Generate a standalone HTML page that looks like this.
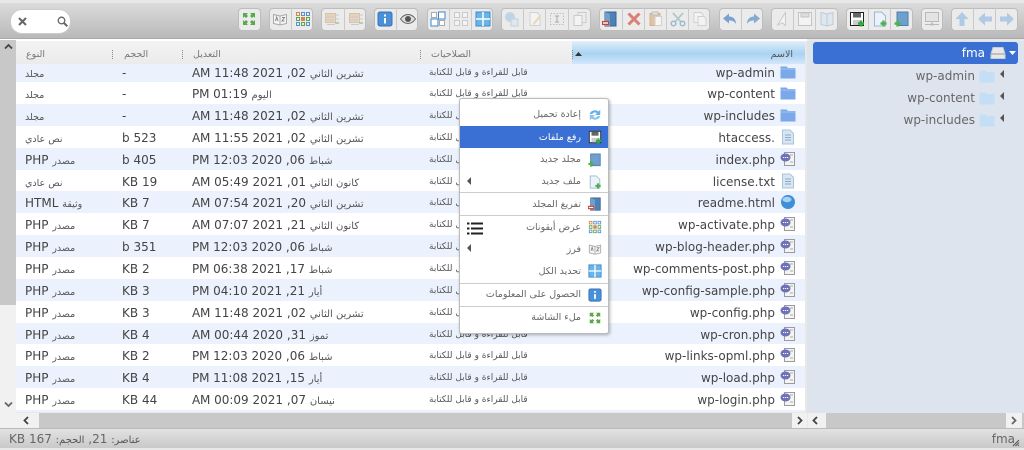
<!DOCTYPE html>
<html lang="ar"><head><meta charset="utf-8"><title>fma</title>
<style>
html,body{margin:0;padding:0}
body{width:1024px;height:450px;overflow:hidden;position:relative;background:#e8e8e8;font-family:"DejaVu Sans","Liberation Sans",sans-serif;font-size:12px;color:#333}
div,span,svg{position:absolute;box-sizing:border-box}
small{font-size:9.5px;color:#555}
.t small,#sx small{font-size:10px;letter-spacing:0}
#tb{left:0;top:3px;width:1024px;height:36px;background:linear-gradient(#dcdcdc,#b9b9b9);border-bottom:1px solid #a9a9a9}
#s{left:10px;top:9px;width:61px;height:25px;background:#fff;border-radius:12px;border:1px solid #ccc}
.g{top:8px;height:23px;border:1px solid #bdbdbd;border-radius:4px;background:#ebebeb}
.b{top:8px;height:23px;width:22px;border-left:1px solid #c9c9c9}
.b svg,.i{width:16px;height:16px}
.b svg{left:3px;top:3px}
.o svg{opacity:.4}
#white{left:0;top:39px;width:807px;height:2px;background:#fff}
#vb{left:0;top:40px;width:16px;height:373px;background:#f1f1f1}
#th{left:0;top:40px;width:16px;height:265px;background:#c8c8c8}
#hd{left:16px;top:41px;width:789px;height:23px;background:linear-gradient(#f3f3f3,#ebebeb)}
#hn{left:572px;top:41px;width:233px;height:23px;background:linear-gradient(#e3eefa,#a8d3f2 55%,#d3e7fa)}
.h{top:48px;font-size:9.5px;color:#777;direction:rtl;white-space:nowrap;line-height:13px}
.d{top:50px;width:1px;height:9px;border-left:1px dotted #888}
.r{left:16px;width:789px;height:22px;background:#fff}
.e{background:#ebf2fd}
.r span{top:4px;line-height:16px;direction:rtl;white-space:nowrap}
.n{right:30px;color:#444}
.m{left:413px;font-size:9px;color:#555}
.t{left:176px;color:#444;letter-spacing:-.15px}
.z{left:106px;color:#444}
.k{left:9px;color:#444}
.r svg{left:764px;top:3px}
#tree{left:807px;top:41px;width:217px;height:372px;background:#dde4ee}
#act{left:813px;top:42px;width:205px;height:22px;background:#3a70d4;border-radius:3px}
.tt{color:#666;white-space:nowrap;line-height:16px}
.ar{width:0;height:0;border-top:4px solid transparent;border-bottom:4px solid transparent;border-right:4px solid #555}
#menu{left:459px;top:98px;width:150px;height:236px;background:#fff;border:1px solid #bbb;border-radius:3px;box-shadow:1px 1px 3px rgba(0,0,0,.3)}
.mi{right:27px;font-size:9.500px;color:#666;direction:rtl;white-space:nowrap;line-height:14px;margin-top:1px}
#menu svg{left:128px}
#menu .i{width:14px;height:14px;margin-top:1px}
.sep{left:0;width:148px;height:1px;background:#ccc}
.hs{top:413px;height:15px;background:#c8c8c8}
.hb{top:413px;height:15px;background:#f1f1f1;color:#555}
.hb svg{left:3px;top:3px;width:9px;height:9px}
#st{left:0;top:428px;width:1024px;height:20px;background:linear-gradient(#e2e2e2,#c9c9c9);border-top:1px solid #bbb}
</style></head><body>
<svg width="0" height="0" style="display:none"><defs>
<symbol id="full" viewBox="0 0 16 16"><g fill="#5aa84a"><path d="M2 2h5l-1.500 1.500L7 5 5 7 3.500 5.500 2 7z"/><path d="M14 2v5l-1.500-1.500L11 7 9 5l1.500-1.500L9 2z"/><path d="M2 14V9l1.500 1.500L5 9l2 2-1.500 1.500L7 14z"/><path d="M14 14H9l1.500-1.500L9 11l2-2 1.500 1.500L14 9z"/></g></symbol>
<symbol id="sort" viewBox="0 0 16 16"><path d="M1.500 3.500 8 5l6.500-1.500v9L8 14l-6.500-1.500z" fill="#f4f4f4" stroke="#aaa"/><path d="M8 5v9" stroke="#aaa"/><path d="M3.500 10l1.200-4 1.200 4M10 6.500h2.500L10 10h2.500" fill="none" stroke="#888"/></symbol>
<symbol id="grid" viewBox="0 0 16 16"><g stroke-width="1" fill="none"><rect x="1.500" y="1.500" width="3" height="3" stroke="#d08a4a"/><rect x="6.500" y="1.500" width="3" height="3" stroke="#5b8fd0"/><rect x="11.500" y="1.500" width="3" height="3" stroke="#5b8fd0"/><rect x="1.500" y="6.500" width="3" height="3" stroke="#5aa84a"/><rect x="6.500" y="6.500" width="3" height="3" fill="#d08a4a" stroke="#d08a4a"/><rect x="11.500" y="6.500" width="3" height="3" stroke="#5aa84a"/><rect x="1.500" y="11.500" width="3" height="3" stroke="#5b8fd0"/><rect x="6.500" y="11.500" width="3" height="3" stroke="#5aa84a"/><rect x="11.500" y="11.500" width="3" height="3" stroke="#5b8fd0"/></g></symbol>
<symbol id="box" viewBox="0 0 16 16"><rect x="1.500" y="2.500" width="10" height="9" fill="#e0b070" stroke="#b98a50"/><path d="M3 6h7M3 9h7M12 4h3M12 8h3M3 13.500h8" stroke="#999"/><path d="M11 11h4v2h-4z" fill="#4dae4d"/></symbol>
<symbol id="info" viewBox="0 0 16 16"><rect x="1" y="1" width="14" height="14" rx="2" fill="#4a90d9" stroke="#3a70b8"/><rect x="7" y="3.500" width="2" height="2" fill="#fff"/><rect x="7" y="7" width="2" height="5.500" fill="#fff"/></symbol>
<symbol id="eye" viewBox="0 0 16 16"><path d="M.5 8C3 4.500 5.500 3.500 8 3.500s5 1 7.500 4.500c-2.500 3.500-5 4.500-7.500 4.500S3 11.500.5 8z" fill="#ddd" stroke="#666"/><circle cx="8" cy="8" r="3" fill="#555"/></symbol>
<symbol id="sinv" viewBox="0 0 16 16"><rect x="1" y="8" width="7" height="7" fill="#fff" stroke="#3a8ad0"/><rect x="8.500" y="1" width="6.500" height="7" fill="#fff" stroke="#3a8ad0"/><rect x="1.500" y="1.500" width="5" height="5" fill="#fff" stroke="#aaa"/><rect x="9.500" y="9.500" width="5" height="5" fill="#fff" stroke="#aaa"/></symbol>
<symbol id="snone" viewBox="0 0 16 16"><g fill="#fff" stroke="#999"><rect x="1.500" y="1.500" width="5" height="5"/><rect x="9.500" y="1.500" width="5" height="5"/><rect x="1.500" y="9.500" width="5" height="5"/><rect x="9.500" y="9.500" width="5" height="5"/></g></symbol>
<symbol id="sall" viewBox="0 0 16 16"><rect x="1" y="1" width="14" height="14" fill="#6ab4ea" stroke="#3a8ad0"/><path d="M8 1v14M1 8h14" stroke="#fff" stroke-width="1.500"/></symbol>
<symbol id="res" viewBox="0 0 16 16"><circle cx="6" cy="6" r="5" fill="#7fb2dc"/><rect x="7" y="8" width="7" height="7" fill="#cfe0f0" stroke="#8ab"/></symbol>
<symbol id="edit" viewBox="0 0 16 16"><path d="M3 1.500h7l3 3v10H3z" fill="#fff" stroke="#aaa"/><path d="M6 12l6-7 1.500 1.500-6 7H6z" fill="#e0c060"/></symbol>
<symbol id="ren" viewBox="0 0 16 16"><rect x="1.500" y="2.500" width="13" height="11" fill="none" stroke="#777" stroke-dasharray="1.500 1.500"/><path d="M6 5h4M6 11h4M8 5v6" stroke="#444"/></symbol>
<symbol id="dup" viewBox="0 0 16 16"><path d="M6 1.500h8v10H6z" fill="#eee" stroke="#999"/><path d="M2 4.500h8v10H2z" fill="#fff" stroke="#999"/></symbol>
<symbol id="clr" viewBox="0 0 16 16"><path d="M3 1h11v14H3z" fill="#4f82b4" stroke="#396692"/><path d="M3 1l5 2v12H3z" fill="#6f9fcc"/><rect x="0" y="10" width="7" height="4" fill="#d93a2a"/><rect x="1" y="11.300" width="5" height="1.400" fill="#fff"/></symbol>
<symbol id="del" viewBox="0 0 16 16"><path d="M2.500 2.500l11 11M13.500 2.500l-11 11" stroke="#d85a50" stroke-width="3"/></symbol>
<symbol id="paste" viewBox="0 0 16 16"><path d="M2 2.500h10v12H2z" fill="#d9a46a" stroke="#b9864e"/><path d="M7 5.500h6.500v9H7z" fill="#fff" stroke="#bbb"/><rect x="4" y="1" width="6" height="3" fill="#ddd" stroke="#999"/></symbol>
<symbol id="cut" viewBox="0 0 16 16"><path d="M3 2l8 9M13 2l-8 9" stroke="#8aa" stroke-width="1.700"/><circle cx="3.500" cy="12.500" r="2.300" fill="none" stroke="#5b8fc0" stroke-width="1.500"/><circle cx="12.500" cy="12.500" r="2.300" fill="none" stroke="#5b8fc0" stroke-width="1.500"/></symbol>
<symbol id="copy" viewBox="0 0 16 16"><path d="M2 1.500h7l2 2v8H2z" fill="#fff" stroke="#aaa"/><path d="M6 5.500h6l2 2v7H6z" fill="#fff" stroke="#aaa"/></symbol>
<symbol id="undo" viewBox="0 0 16 16"><path d="M7 2.500 1 7.500l6 5V9.500c3.500 0 5.500 1 7 3.500 0-5-3-7.500-7-7.500z" fill="#6d9ccb"/></symbol>
<symbol id="redo" viewBox="0 0 16 16"><path d="M9 2.500l6 5-6 5V9.500c-3.500 0-5.500 1-7 3.500 0-5 3-7.500 7-7.500z" fill="#6d9ccb"/></symbol>
<symbol id="cur" viewBox="0 0 16 16"><path d="M11.500 1.500v13l-3-2.500-5 2z" fill="#fff" stroke="#999"/></symbol>
<symbol id="save" viewBox="0 0 16 16"><path d="M1.500 1.500h13v13h-13z" fill="#fff" stroke="#888"/><rect x="4" y="2" width="8" height="4" fill="#ccc" stroke="#888"/></symbol>
<symbol id="book" viewBox="0 0 16 16"><path d="M2 1.500 8 3v12l-6-1.500zM8 3l6-1.500v12L8 15z" fill="#cfe0f0" stroke="#7a9cc0"/></symbol>
<symbol id="up" viewBox="0 0 16 16"><rect x="1.500" y="1.500" width="13" height="13" fill="#fff" stroke="#222"/><rect x="4" y="2" width="8" height="4.500" fill="#666"/><rect x="4" y="9" width="8" height="5" fill="#ccc"/><path d="M9 12.500h6M12 9.500v6" stroke="#2faa3c" stroke-width="2.400"/></symbol>
<symbol id="nf" viewBox="0 0 16 16"><path d="M2.500 1h7l4 4v10h-11z" fill="#eaf2fa" stroke="#9bb8d6"/><path d="M8.500 12.500h6M11.500 9.500v6" stroke="#4fb04f" stroke-width="2.400"/></symbol>
<symbol id="nd" viewBox="0 0 16 16"><path d="M3 1h11v13.500H3z" fill="#6f9fcc" stroke="#4f7fac"/><path d="M.5 12.500h6M3.500 9.500v6" stroke="#4fb04f" stroke-width="2.400"/></symbol>
<symbol id="net" viewBox="0 0 16 16"><rect x="1.500" y="1.500" width="13" height="9" fill="#ddd" stroke="#888"/><path d="M1 13.500h14M8 10.500v3" stroke="#888"/><rect x="6.500" y="12.500" width="3" height="2" fill="#6a6"/></symbol>
<symbol id="aup" viewBox="0 0 16 16"><path d="M8 1l6.500 7H10.500v7h-5V8H1.500z" fill="#74abe0"/></symbol>
<symbol id="alf" viewBox="0 0 16 16"><path d="M1 8l7-6.500V5.500h7v5H8v4z" fill="#74abe0"/></symbol>
<symbol id="art" viewBox="0 0 16 16"><path d="M15 8L8 1.500V5.500H1v5h7v4z" fill="#74abe0"/></symbol>
<symbol id="fold" viewBox="0 0 16 16"><path d="M.5 2.500h6l1.500 1.500h7.500v10.500H.5z" fill="#7ba8e8"/><path d="M.5 5h15" stroke="#a3c3f0"/></symbol>
<symbol id="lfold" viewBox="0 0 16 16"><path d="M.5 2.500h6l1.500 1.500h7.500v10.500H.5z" fill="#c4def5"/></symbol>
<symbol id="txt" viewBox="0 0 16 16"><path d="M2.500 1h7.500l3.500 3.500V15h-11z" fill="#d8e6f4" stroke="#aac3dc"/><path d="M5 6h6M5 8.500h6M5 11h6" stroke="#8aa8c8"/></symbol>
<symbol id="php" viewBox="0 0 16 16"><path d="M4.500 1.500h10v13h-10z" fill="#f4f6ee" stroke="#99a"/><path d="M10 4h3M10 11h3" stroke="#aaa"/><ellipse cx="5.500" cy="6.500" rx="5" ry="4" fill="#6f72b8"/><path d="M3 6.500h1.200M5 6.500h1.200M7 6.500h1.200" stroke="#fff"/></symbol>
<symbol id="html" viewBox="0 0 16 16"><circle cx="8" cy="8" r="7" fill="#3f8ed8"/><ellipse cx="7" cy="5.500" rx="4.500" ry="2.700" fill="#a8d2f3"/></symbol>
<symbol id="rl" viewBox="0 0 16 16"><path d="M2 7a6 5 0 0 1 10-3l2-2v6H8l2-2a3 3 0 0 0-5 1z" fill="#6ab0e6"/><path d="M14 9a6 5 0 0 1-10 3l-2 2V8h6l-2 2a3 3 0 0 0 5-1z" fill="#8cc4ee"/></symbol>
<symbol id="drv" viewBox="0 0 16 16"><path d="M3 2.500h10l2 6.500v4.500H1V9z" fill="#e8e8e8" stroke="#ccc"/><path d="M1 9h14" stroke="#999"/></symbol>
</defs></svg>

<div id="tb"></div>
<div id="s"><svg style="left:7px;top:7px;width:9px;height:9px" viewBox="0 0 9 9"><path d="M1 1l7 7M8 1L1 8" stroke="#666" stroke-width="2"/></svg><svg style="left:46px;top:6px;width:11px;height:11px" viewBox="0 0 11 11"><circle cx="4.500" cy="4.500" r="3.300" fill="none" stroke="#666" stroke-width="1.300"/><path d="M7 7l3.300 3.300" stroke="#666" stroke-width="2"/></svg></div>

<div class="g" style="left:238px;width:23px"></div>
<div class="g" style="left:269px;width:44px"></div>
<div class="g" style="left:321px;width:45px"></div>
<div class="g" style="left:374px;width:44px"></div>
<div class="g" style="left:427px;width:66px"></div>
<div class="g" style="left:501px;width:90px"></div>
<div class="g" style="left:599px;width:111px"></div>
<div class="g" style="left:719px;width:44px"></div>
<div class="g" style="left:771px;width:67px"></div>
<div class="g" style="left:846px;width:67px"></div>
<div class="g" style="left:921px;width:22px"></div>
<div class="g" style="left:951px;width:67px"></div>

<div class="b" style="left:238px;border:0"><svg><use href="#full"/></svg></div>
<div class="b" style="left:269px;border:0"><svg><use href="#sort"/></svg></div>
<div class="b" style="left:291px"><svg><use href="#grid"/></svg></div>
<div class="b o" style="left:321px;border:0"><svg><use href="#box"/></svg></div>
<div class="b o" style="left:344px"><svg><use href="#box"/></svg></div>
<div class="b" style="left:374px;border:0"><svg><use href="#info"/></svg></div>
<div class="b" style="left:396px"><svg><use href="#eye"/></svg></div>
<div class="b" style="left:427px;border:0"><svg><use href="#sinv"/></svg></div>
<div class="b o" style="left:449px"><svg><use href="#snone"/></svg></div>
<div class="b" style="left:471px"><svg><use href="#sall"/></svg></div>
<div class="b o" style="left:501px;border:0"><svg><use href="#res"/></svg></div>
<div class="b o" style="left:523px"><svg><use href="#edit"/></svg></div>
<div class="b o" style="left:545px"><svg><use href="#ren"/></svg></div>
<div class="b o" style="left:568px"><svg><use href="#dup"/></svg></div>
<div class="b" style="left:599px;border:0"><svg><use href="#clr"/></svg></div>
<div class="b o" style="left:622px"><svg style="opacity:.75"><use href="#del"/></svg></div>
<div class="b o" style="left:644px"><svg style="opacity:.55"><use href="#paste"/></svg></div>
<div class="b o" style="left:666px"><svg style="opacity:.55"><use href="#cut"/></svg></div>
<div class="b o" style="left:688px"><svg><use href="#copy"/></svg></div>
<div class="b o" style="left:719px;border:0"><svg style="opacity:.9"><use href="#undo"/></svg></div>
<div class="b o" style="left:741px"><svg style="opacity:.8"><use href="#redo"/></svg></div>
<div class="b o" style="left:771px;border:0"><svg><use href="#cur"/></svg></div>
<div class="b o" style="left:793px"><svg><use href="#save"/></svg></div>
<div class="b o" style="left:815px"><svg><use href="#book"/></svg></div>
<div class="b" style="left:846px;border:0"><svg><use href="#up"/></svg></div>
<div class="b" style="left:868px"><svg><use href="#nf"/></svg></div>
<div class="b" style="left:890px"><svg><use href="#nd"/></svg></div>
<div class="b o" style="left:921px;border:0"><svg style="opacity:.5"><use href="#net"/></svg></div>
<div class="b o" style="left:951px;border:0"><svg style="opacity:.5"><use href="#aup"/></svg></div>
<div class="b o" style="left:973px"><svg style="opacity:.5"><use href="#alf"/></svg></div>
<div class="b o" style="left:995px"><svg style="opacity:.5"><use href="#art"/></svg></div>

<div id="white"></div>
<div id="vb"></div><div id="th"></div>
<svg style="left:4px;top:43px;width:9px;height:7px" viewBox="0 0 9 7"><path d="M1 5.500l3.500-3.500L8 5.500" fill="none" stroke="#444" stroke-width="1.800"/></svg>
<svg style="left:4px;top:401px;width:9px;height:7px" viewBox="0 0 9 7"><path d="M1 1.500L4.500 5 8 1.500" fill="none" stroke="#666" stroke-width="1.800"/></svg>

<div style="left:16px;top:64px;width:789px;height:348px;background:#ebf2fd"></div>

<div class="r e" style="top:64px;height:18px"><span class="n" style="top:1px">wp-admin</span><svg class="i" style="top:0"><use href="#fold"/></svg><span class="m" style="top:1px">قابل للقراءة و قابل للكتابة</span><span class="t" style="top:1px"><small>تشرين الثاني</small> 02, 2021 11:48 AM</span><span class="z" style="top:1px">-</span><span class="k" style="top:1px"><small>مجلد</small></span></div>
<div class="r" style="top:82px"><span class="n">wp-content</span><svg class="i"><use href="#fold"/></svg><span class="m">قابل للقراءة و قابل للكتابة</span><span class="t"><small>اليوم</small> 01:19 PM</span><span class="z">-</span><span class="k"><small>مجلد</small></span></div>
<div class="r e" style="top:104px"><span class="n">wp-includes</span><svg class="i"><use href="#fold"/></svg><span class="m">قابل للقراءة و قابل للكتابة</span><span class="t"><small>تشرين الثاني</small> 02, 2021 11:48 AM</span><span class="z">-</span><span class="k"><small>مجلد</small></span></div>
<div class="r" style="top:126px"><span class="n">.htaccess</span><svg class="i"><use href="#txt"/></svg><span class="m">قابل للقراءة و قابل للكتابة</span><span class="t"><small>تشرين الثاني</small> 02, 2021 11:55 AM</span><span class="z">523 b</span><span class="k"><small>نص عادي</small></span></div>
<div class="r e" style="top:148px"><span class="n">index.php</span><svg class="i"><use href="#php"/></svg><span class="m">قابل للقراءة و قابل للكتابة</span><span class="t"><small>شباط</small> 06, 2020 12:03 PM</span><span class="z">405 b</span><span class="k"><small>مصدر</small> PHP</span></div>
<div class="r" style="top:170px"><span class="n">license.txt</span><svg class="i"><use href="#txt"/></svg><span class="m">قابل للقراءة و قابل للكتابة</span><span class="t"><small>كانون الثاني</small> 01, 2021 05:49 AM</span><span class="z">19 KB</span><span class="k"><small>نص عادي</small></span></div>
<div class="r e" style="top:191px"><span class="n">readme.html</span><svg class="i"><use href="#html"/></svg><span class="m">قابل للقراءة و قابل للكتابة</span><span class="t"><small>تشرين الثاني</small> 20, 2021 07:54 AM</span><span class="z">7 KB</span><span class="k"><small>وثيقة</small> HTML</span></div>
<div class="r" style="top:213px"><span class="n">wp-activate.php</span><svg class="i"><use href="#php"/></svg><span class="m">قابل للقراءة و قابل للكتابة</span><span class="t"><small>كانون الثاني</small> 21, 2021 07:07 AM</span><span class="z">7 KB</span><span class="k"><small>مصدر</small> PHP</span></div>
<div class="r e" style="top:235px"><span class="n">wp-blog-header.php</span><svg class="i"><use href="#php"/></svg><span class="m">قابل للقراءة و قابل للكتابة</span><span class="t"><small>شباط</small> 06, 2020 12:03 PM</span><span class="z">351 b</span><span class="k"><small>مصدر</small> PHP</span></div>
<div class="r" style="top:257px"><span class="n">wp-comments-post.php</span><svg class="i"><use href="#php"/></svg><span class="m">قابل للقراءة و قابل للكتابة</span><span class="t"><small>شباط</small> 17, 2021 06:38 PM</span><span class="z">2 KB</span><span class="k"><small>مصدر</small> PHP</span></div>
<div class="r e" style="top:279px"><span class="n">wp-config-sample.php</span><svg class="i"><use href="#php"/></svg><span class="m">قابل للقراءة و قابل للكتابة</span><span class="t"><small>أيار</small> 21, 2021 04:10 PM</span><span class="z">3 KB</span><span class="k"><small>مصدر</small> PHP</span></div>
<div class="r" style="top:301px"><span class="n">wp-config.php</span><svg class="i"><use href="#php"/></svg><span class="m">قابل للقراءة و قابل للكتابة</span><span class="t"><small>تشرين الثاني</small> 02, 2021 11:48 AM</span><span class="z">3 KB</span><span class="k"><small>مصدر</small> PHP</span></div>
<div class="r e" style="top:323px"><span class="n">wp-cron.php</span><svg class="i"><use href="#php"/></svg><span class="m">قابل للقراءة و قابل للكتابة</span><span class="t"><small>تموز</small> 31, 2020 00:44 AM</span><span class="z">4 KB</span><span class="k"><small>مصدر</small> PHP</span></div>
<div class="r" style="top:344px"><span class="n">wp-links-opml.php</span><svg class="i"><use href="#php"/></svg><span class="m">قابل للقراءة و قابل للكتابة</span><span class="t"><small>شباط</small> 06, 2020 12:03 PM</span><span class="z">2 KB</span><span class="k"><small>مصدر</small> PHP</span></div>
<div class="r e" style="top:366px"><span class="n">wp-load.php</span><svg class="i"><use href="#php"/></svg><span class="m">قابل للقراءة و قابل للكتابة</span><span class="t"><small>أيار</small> 15, 2021 11:08 PM</span><span class="z">4 KB</span><span class="k"><small>مصدر</small> PHP</span></div>
<div class="r" style="top:388px"><span class="n">wp-login.php</span><svg class="i"><use href="#php"/></svg><span class="m">قابل للقراءة و قابل للكتابة</span><span class="t"><small>نيسان</small> 07, 2021 00:09 AM</span><span class="z">44 KB</span><span class="k"><small>مصدر</small> PHP</span></div>

<div id="hd"></div><div id="hn"></div>
<div class="h" style="left:26px">النوع</div>
<div class="d" style="left:112px"></div>
<div class="h" style="left:124px">الحجم</div>
<div class="d" style="left:182px"></div>
<div class="h" style="left:193px">التعديل</div>
<div class="d" style="left:420px"></div>
<div class="h" style="left:431px">الصلاحيات</div>
<div class="d" style="left:572px"></div>
<svg style="left:575px;top:52px;width:7px;height:4px" viewBox="0 0 7 4"><path d="M0 4l3.500-4L7 4z" fill="#333"/></svg>
<div class="h" style="right:231px;color:#555">الاسم</div>

<div id="tree"></div>
<div id="act"></div>
<div class="tt" style="right:39px;top:45px;color:#fff">fma</div>
<svg class="i" style="left:990px;top:45px"><use href="#drv"/></svg>
<svg style="left:1009px;top:51px;width:7px;height:4px" viewBox="0 0 7 4"><path d="M0 0h7L3.500 4z" fill="#fff"/></svg>
<div class="tt" style="right:49px;top:68px">wp-admin</div><svg class="i" style="left:979px;top:68px"><use href="#lfold"/></svg><div class="ar" style="left:1000px;top:70px"></div>
<div class="tt" style="right:49px;top:90px">wp-content</div><svg class="i" style="left:979px;top:90px"><use href="#lfold"/></svg><div class="ar" style="left:1000px;top:92px"></div>
<div class="tt" style="right:49px;top:112px">wp-includes</div><svg class="i" style="left:979px;top:112px"><use href="#lfold"/></svg><div class="ar" style="left:1000px;top:114px"></div>

<div id="menu">
<svg class="i" style="top:8px"><use href="#rl"/></svg><div class="mi" style="top:8px">إعادة تحميل</div>
<div style="left:0;top:27px;width:148px;height:22px;background:#3a70d4"></div>
<svg class="i" style="top:30px"><use href="#up"/></svg><div class="mi" style="top:31px;color:#fff">رفع ملفات</div>
<svg class="i" style="top:53px"><use href="#nd"/></svg><div class="mi" style="top:53px">مجلد جديد</div>
<svg class="i" style="top:75px"><use href="#nf"/></svg><div class="mi" style="top:75px">ملف جديد</div>
<div class="ar" style="left:7px;top:78px"></div>
<div class="sep" style="top:93px"></div>
<svg class="i" style="top:97px"><use href="#clr"/></svg><div class="mi" style="top:98px">تفريغ المجلد</div>
<div class="sep" style="top:116px"></div>
<svg class="i" style="top:120px"><use href="#grid"/></svg><div class="mi" style="top:121px">عرض أيقونات</div>
<svg style="left:7px;top:123px;width:16px;height:13px" viewBox="0 0 16 13"><path d="M0 1.500h2.500M4 1.500h12M0 6.500h2.500M4 6.500h12M0 11.500h2.500M4 11.500h12" stroke="#222" stroke-width="2"/></svg>
<svg class="i" style="top:142px"><use href="#sort"/></svg><div class="mi" style="top:143px">فرز</div>
<div class="ar" style="left:7px;top:145px"></div>
<svg class="i" style="top:164px"><use href="#sall"/></svg><div class="mi" style="top:165px">تحديد الكل</div>
<div class="sep" style="top:184px"></div>
<svg class="i" style="top:188px"><use href="#info"/></svg><div class="mi" style="top:188px">الحصول على المعلومات</div>
<div class="sep" style="top:207px"></div>
<svg class="i" style="top:211px"><use href="#full"/></svg><div class="mi" style="top:211px">ملء الشاشة</div>
</div>

<div class="hs" style="left:0;width:806px"></div>
<div class="hs" style="left:808px;width:216px;"></div>
<div style="left:0;top:413px;width:16px;height:15px;background:#f1f1f1"></div>
<div class="hb" style="left:16px;width:23px"><svg viewBox="0 0 9 9" style="left:6px"><path d="M6 1L2.500 4.500 6 8" fill="none" stroke="#444" stroke-width="1.800"/></svg></div>
<div class="hb" style="left:792px;width:15px"><svg viewBox="0 0 9 9"><path d="M3 1l3.500 3.500L3 8" fill="none" stroke="#444" stroke-width="1.800"/></svg></div>
<div class="hb" style="left:808px;width:18px"><svg viewBox="0 0 9 9"><path d="M6 1L2.500 4.500 6 8" fill="none" stroke="#444" stroke-width="1.800"/></svg></div>
<div class="hb" style="left:1006px;width:16px"><svg viewBox="0 0 9 9"><path d="M3 1l3.500 3.500L3 8" fill="none" stroke="#666" stroke-width="1.800"/></svg></div>

<div id="st"></div>
<div id="sx" style="left:9px;top:432px;direction:rtl;white-space:nowrap;color:#666;line-height:15px;font-size:12px"><small>عناصر:</small> 21, <small>الحجم:</small> 167 KB</div>
<div style="right:9px;top:432px;color:#666;line-height:15px">fma</div>
<svg style="left:1012px;top:439px;width:8px;height:8px" viewBox="0 0 8 8"><path d="M1 7l6-6M3.500 7L7 3.500M6 7l1-1" stroke="#555"/></svg>
</body></html>
